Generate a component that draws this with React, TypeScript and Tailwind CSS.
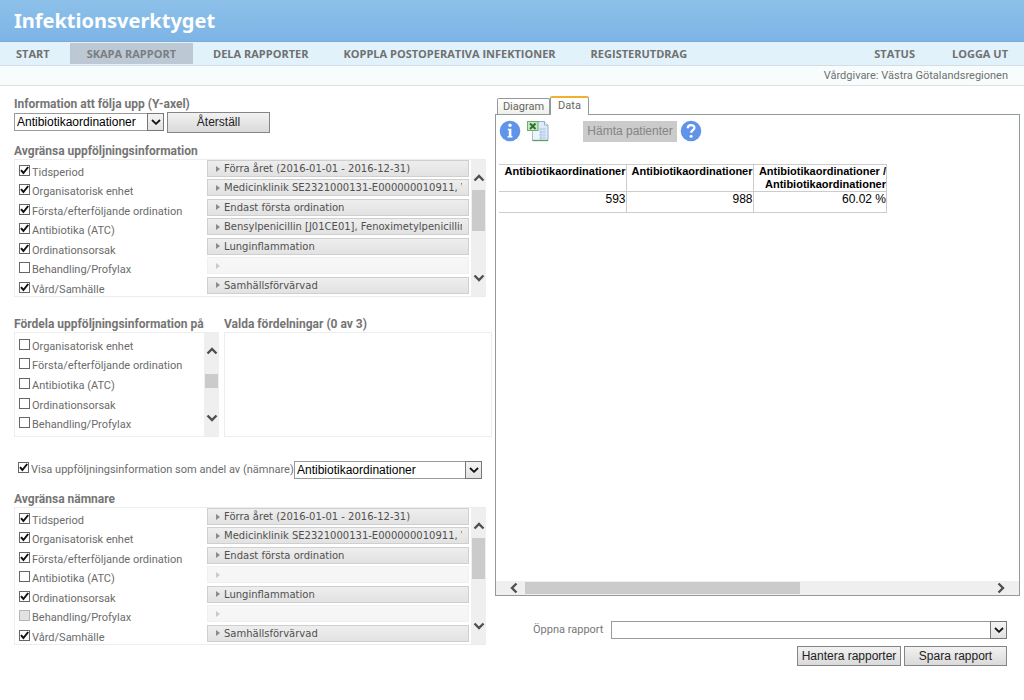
import React from "react";

type Row = {
  label: string;
  checked?: boolean;
  disabled?: boolean;
  value?: string;
};

const followUpRows: Row[] = [
  { label: "Tidsperiod", checked: true, value: "Förra året (2016-01-01 - 2016-12-31)" },
  { label: "Organisatorisk enhet", checked: true, value: "Medicinklinik SE2321000131-E000000010911, Vårdcentral" },
  { label: "Första/efterföljande ordination", checked: true, value: "Endast första ordination" },
  { label: "Antibiotika (ATC)", checked: true, value: "Bensylpenicillin [J01CE01], Fenoximetylpenicillin [J01CE02]" },
  { label: "Ordinationsorsak", checked: true, value: "Lunginflammation" },
  { label: "Behandling/Profylax" },
  { label: "Vård/Samhälle", checked: true, value: "Samhällsförvärvad" },
];

const denominatorRows: Row[] = followUpRows.map((row) => {
  if (row.label === "Antibiotika (ATC)") return { label: row.label };
  if (row.label === "Behandling/Profylax") return { label: row.label, disabled: true };
  return row;
});

const distributionLabels = [
  "Organisatorisk enhet",
  "Första/efterföljande ordination",
  "Antibiotika (ATC)",
  "Ordinationsorsak",
  "Behandling/Profylax",
];

const leftNav = ["DELA RAPPORTER", "KOPPLA POSTOPERATIVA INFEKTIONER", "REGISTERUTDRAG"];

function Check({ label, checked, disabled }: Row) {
  return (
    <label className="flex items-start gap-0.5 text-[11px] leading-4 whitespace-nowrap text-[#6b6b6b]">
      <span className="relative block size-[11px] shrink-0">
        <input
          type="checkbox"
          defaultChecked={checked}
          disabled={disabled}
          className="peer block size-[11px] appearance-none border border-[#666] bg-white disabled:border-[#b5b5b5] disabled:bg-[#e2e2e2]"
        />
        <svg
          viewBox="0 0 11 11"
          className="pointer-events-none absolute inset-0 hidden size-[11px] peer-checked:block"
          fill="none"
          stroke="#111"
          strokeWidth="2"
        >
          <path d="M2 5.2 4.4 8 9.2 2" />
        </svg>
      </span>
      <span>{label}</span>
    </label>
  );
}

function Select({ label, value, className }: { label: string; value: string; className: string }) {
  return (
    <span className={`relative block ${className}`}>
      <select
        aria-label={label}
        className="block h-[18px] w-full appearance-none border border-[#9a9a9a] bg-white pr-5 pl-0.5 text-xs leading-4 text-black"
      >
        <option>{value}</option>
      </select>
      <span className="pointer-events-none absolute inset-y-0 right-0 flex w-[17px] items-center justify-center border border-[#777] bg-linear-to-b from-[#f4f4f4] to-[#e2e2e2]">
        <svg viewBox="0 0 10 6" className="h-1.5 w-2.5" fill="none" stroke="#111" strokeWidth="1.8">
          <path d="M1 1 5 4.8 9 1" />
        </svg>
      </span>
    </span>
  );
}

function Button({ children, className }: { children: React.ReactNode; className: string }) {
  return (
    <button
      type="button"
      className={`border border-[#858585] bg-linear-to-b from-[#f2f2f2] to-[#dadada] text-xs leading-4 whitespace-nowrap text-[#222] ${className}`}
    >
      {children}
    </button>
  );
}

function Arrow({ dir }: { dir: "up" | "down" | "left" | "right" }) {
  const paths = {
    up: "M1.5 8.5 6 4 10.5 8.5",
    down: "M1.5 3.5 6 8 10.5 3.5",
    left: "M8.5 1.5 4 6 8.5 10.5",
    right: "M3.5 1.5 8 6 3.5 10.5",
  };
  return (
    <svg viewBox="0 0 12 12" className="size-3 shrink-0" fill="none" stroke="#505050" strokeWidth="2.4">
      <path d={paths[dir]} />
    </svg>
  );
}

function ScrollTrack({ className, thumb }: { className: string; thumb: string }) {
  return (
    <div aria-hidden="true" className={`flex w-[15px] shrink-0 flex-col items-center bg-[#efefef] ${className}`}>
      <Arrow dir="up" />
      <div className={`w-[13px] bg-[#cbcbcb] ${thumb}`} />
      <div className="flex-1" />
      <Arrow dir="down" />
    </div>
  );
}

function Heading({ children }: { children: React.ReactNode }) {
  return <h2 className="text-xs leading-4 font-bold whitespace-nowrap text-[#757575]">{children}</h2>;
}

function FilterPanel({ rows }: { rows: Row[] }) {
  return (
    <div className="mr-1.5 flex h-[138px] border-y border-l border-[#ededed]">
      <div className="grid min-w-0 flex-1 grid-cols-1 grid-rows-7 pl-1">
        {rows.map((row) => (
          <div key={row.label} className="flex min-h-0 min-w-0 items-start pr-0.5">
            <div className="w-[188px] shrink-0 pt-[5px]">
              <Check {...row} />
            </div>
            <button
              type="button"
              disabled={!row.value}
              aria-label={row.label}
              className="flex h-[17px] min-w-0 flex-1 items-center border border-[#cfcfcf] bg-linear-to-b from-[#eeeeee] to-[#e2e2e2] pr-1.5 pl-2 text-[#505050] disabled:border-[#f0f0f0] disabled:from-[#f7f7f7] disabled:to-[#f5f5f5] disabled:text-[#cccccc]"
            >
              <svg viewBox="0 0 4 6" className="h-1.5 w-1 shrink-0 text-[#8a8a8a]" fill="currentColor" opacity={row.value ? 1 : 0.4}>
                <path d="M0 0 4 3 0 6Z" />
              </svg>
              <span className="ml-1 min-w-0 overflow-hidden font-['DejaVu_Sans',sans-serif] text-[10px] leading-[15px] whitespace-nowrap">
                {row.value}
              </span>
            </button>
          </div>
        ))}
      </div>
      <ScrollTrack className="py-3" thumb="mt-1.5 h-[41px]" />
    </div>
  );
}

function NavLink({ children }: { children: React.ReactNode }) {
  return (
    <a href="#" className="whitespace-nowrap">
      {children}
    </a>
  );
}

function ExcelIcon() {
  return (
    <svg viewBox="0 0 22 22" className="size-[22px]">
      <path d="M9 1.5h8.500l3.500 3.500v15.500H9z" fill="#dfeaf8" stroke="#93aecb" />
      <path d="M17.500 1.500v3.500H21" fill="#fff" stroke="#93aecb" />
      <path d="M5.500 11v9.500H14V11" fill="#eef4fb" stroke="#a9bdd3" />
      <path d="M12 9h7M12 12h7M12 15h7M12 18h7M14 8v11M17 8v11" stroke="#b4cfec" />
      <path d="M5.500 20.500h15.500" stroke="#5d9f62" strokeWidth="1.300" />
      <rect x=".5" y="1.500" width="10.500" height="9" fill="#c9e6c4" stroke="#6fae69" />
      <path d="m3 3.500 5.500 5.500M8.500 3.500 3 9" stroke="#23782b" strokeWidth="2" />
    </svg>
  );
}

export default function App() {
  const th = "border border-[#cccccc] text-right align-top font-bold whitespace-nowrap";
  const td = "h-[21px] border border-[#cccccc] text-right align-top text-xs leading-[14px]";
  return (
    <div className="min-h-screen bg-white font-['Liberation_Sans',Arial,sans-serif]">
      <header className="font-['Open_Sans',sans-serif]">
        <div className="flex h-[42px] items-center border-b border-[#79aedb] bg-linear-to-b from-[#8dc1ea] to-[#7db4e5] px-3.5">
          <h1 className="font-['Noto_Sans',sans-serif] text-xl leading-7 font-bold text-white">Infektionsverktyget</h1>
        </div>
        <nav className="flex h-6 items-center border-b border-[#d5dde0] bg-[#e2f2fb] px-4 text-[11px] leading-4 font-bold text-[#707070]">
          <NavLink>START</NavLink>
          <a href="#" className="mx-5 flex h-[21px] items-center bg-[#bcc8d4] px-[17px] whitespace-nowrap text-[#7a7e82]">
            SKAPA RAPPORT
          </a>
          <div className="flex gap-[35px]">
            {leftNav.map((item) => (
              <NavLink key={item}>{item}</NavLink>
            ))}
          </div>
          <div className="ml-auto flex gap-[37px]">
            <NavLink>STATUS</NavLink>
            <NavLink>LOGGA UT</NavLink>
          </div>
        </nav>
        <div className="flex h-5 items-center justify-end border-b border-[#dde2e2] bg-[#f7fdfd] px-4 pt-px font-[Roboto,sans-serif] text-[11px] leading-4 text-[#707070]">
          Vårdgivare: Västra Götalandsregionen
        </div>
      </header>

      <main className="grid grid-cols-[478fr_525fr] gap-[3px] pt-2.5 pr-1 pl-3.5">
        <div className="min-w-0 font-[Roboto,sans-serif]">
          <section>
            <Heading>Information att följa upp (Y-axel)</Heading>
            <div className="flex h-5 items-center gap-[3px] font-['Liberation_Sans',Arial,sans-serif]">
              <Select label="Information att följa upp (Y-axel)" value="Antibiotikaordinationer" className="w-[150px]" />
              <Button className="h-[21px] w-[103px]">Återställ</Button>
            </div>
          </section>

          <section className="mt-[11px]">
            <Heading>Avgränsa uppföljningsinformation</Heading>
            <FilterPanel rows={followUpRows} />
          </section>

          <section className="mt-[19px] flex gap-[5px]">
            <div className="w-[205px] shrink-0">
              <Heading>Fördela uppföljningsinformation på</Heading>
              <div className="flex h-[105px] border-y border-l border-[#ededed]">
                <div className="grid min-w-0 flex-1 grid-rows-5 pt-1 pb-px pl-1">
                  {distributionLabels.map((label) => (
                    <div key={label} className="flex items-center">
                      <Check label={label} />
                    </div>
                  ))}
                </div>
                <ScrollTrack className="py-3" thumb="mt-[17px] h-3.5" />
              </div>
            </div>
            <div className="min-w-0 flex-1">
              <Heading>Valda fördelningar (0 av 3)</Heading>
              <div className="h-[105px] border border-[#ededed]" />
            </div>
          </section>

          <section className="mt-6 flex items-center justify-between pr-2.5 pl-1">
            <Check label="Visa uppföljningsinformation som andel av (nämnare)" checked />
            <div className="font-['Liberation_Sans',Arial,sans-serif]">
              <Select label="Nämnare" value="Antibiotikaordinationer" className="w-[188px]" />
            </div>
          </section>

          <section className="mt-3">
            <Heading>Avgränsa nämnare</Heading>
            <FilterPanel rows={denominatorRows} />
          </section>
        </div>

        <div className="min-w-0">
          <div role="tablist" className="flex items-end pl-0.5 font-[Roboto,sans-serif] text-[11px] leading-4 text-[#666]">
            <button type="button" role="tab" aria-selected="false" className="h-4 w-[53px] rounded-t-xs border border-b-0 border-[#919b9c] bg-linear-to-b from-white to-[#f0f0ea] leading-3">
              Diagram
            </button>
            <button type="button" role="tab" aria-selected="true" className="-mb-px h-[19px] w-[39px] rounded-t-xs border-x border-t-2 border-x-[#919b9c] border-t-[#f0b030] bg-white pb-0.5">
              Data
            </button>
          </div>
          <div className="flex h-[482px] flex-col border border-[#919b9c]">
            <div className="flex items-center px-[3px] pt-[5px]">
              <svg viewBox="0 0 22 22" className="size-[22px]" role="img" aria-label="Information">
                <circle cx="11" cy="11" r="10.300" fill="#5f94ea" />
                <circle cx="11" cy="5.300" r="1.700" fill="#fff" />
                <path d="M8.800 8.800h3.600v7.200h1v1.400H8.600V16h1.200v-5.800h-1z" fill="#fff" />
              </svg>
              <span className="ml-1.5">
                <ExcelIcon />
              </span>
              <button type="button" disabled className="ml-[34px] h-[21px] w-[94px] bg-[#cbcbcb] text-xs whitespace-nowrap text-[#858585]">
                Hämta patienter
              </button>
              <svg viewBox="0 0 22 22" className="ml-[3px] size-[22px]" role="img" aria-label="Hjälp">
                <circle cx="11" cy="11" r="10.300" fill="#5f94ea" />
                <path d="M7.800 8.200c0-4.200 6.600-4 6.600-.4 0 2.400-3.300 2.300-3.300 5" fill="none" stroke="#fff" strokeWidth="2.300" />
                <circle cx="11.100" cy="16.200" r="1.500" fill="#fff" />
              </svg>
            </div>
            <table className="mt-[22px] ml-[3px] w-[388px] border-collapse text-[11px] leading-[13px] text-black">
              <thead>
                <tr>
                  <th className={`${th} w-[127px] border-l-0`}>Antibiotikaordinationer</th>
                  <th className={`${th} w-[127px]`}>Antibiotikaordinationer</th>
                  <th className={th}>
                    Antibiotikaordinationer /<br />
                    Antibiotikaordinationer
                  </th>
                </tr>
              </thead>
              <tbody>
                <tr>
                  <td className={`${td} border-l-0`}>593</td>
                  <td className={td}>988</td>
                  <td className={td}>60.02 %</td>
                </tr>
              </tbody>
            </table>
            <div aria-hidden="true" className="mt-auto flex h-3.5 items-center bg-[#efefef] px-3">
              <Arrow dir="left" />
              <div className="ml-[5px] h-3 w-[275px] bg-[#cbcbcb]" />
              <div className="flex-1" />
              <Arrow dir="right" />
            </div>
          </div>
          <div className="flex items-center gap-2 pt-[25px] pr-[13px] pl-[38px]">
            <span className="font-[Roboto,sans-serif] text-[11px] leading-4 whitespace-nowrap text-[#777]">Öppna rapport</span>
            <Select label="Öppna rapport" value="" className="flex-1" />
          </div>
          <div className="flex justify-end gap-[3px] pt-[7px] pr-[13px]">
            <Button className="h-5 w-[104px]">Hantera rapporter</Button>
            <Button className="h-5 w-[103px]">Spara rapport</Button>
          </div>
        </div>
      </main>
    </div>
  );
}
